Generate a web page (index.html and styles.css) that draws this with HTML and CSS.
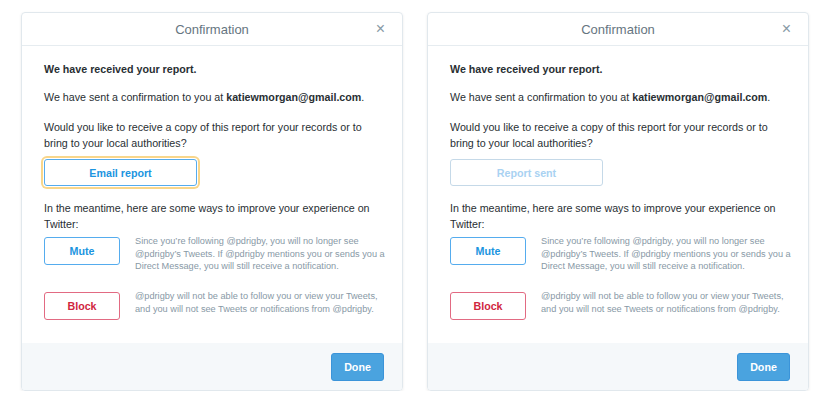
FILE: index.html
```html
<!DOCTYPE html>
<html lang="en">
<head>
    <meta charset="UTF-8">
    <title>Confirmation</title>
<link rel="stylesheet" href="styles.css">
</head>
<body>
    <div class="stage">
        <div class="dialog">
            <div class="dialog-head">
                <h2>Confirmation</h2>
                <span class="close">&times;</span>
            </div>
            <div class="dialog-body">
                <p class="lead">We have received your report.</p>
                <p class="sent">We have sent a confirmation to you at <b>katiewmorgan@gmail.com</b>.</p>
                <p class="ask">Would you like to receive a copy of this report for your records or to bring to your local authorities?</p>
                <button class="btn btn-wide focus">Email report</button>
                <p class="meantime">In the meantime, here are some ways to improve your experience on Twitter:</p>
                <div class="option">
                    <button class="btn btn-small">Mute</button>
                    <p>Since you’re following @pdrigby, you will no longer see @pdrigby’s Tweets. If @pdrigby mentions you or sends you a Direct Message, you will still receive a notification.</p>
                </div>
                <div class="option">
                    <button class="btn btn-small danger">Block</button>
                    <p>@pdrigby will not be able to follow you or view your Tweets, and you will not see Tweets or notifications from @pdrigby.</p>
                </div>
            </div>
            <div class="dialog-foot">
                <button class="done">Done</button>
            </div>
        </div>

        <div class="dialog">
            <div class="dialog-head">
                <h2>Confirmation</h2>
                <span class="close">&times;</span>
            </div>
            <div class="dialog-body">
                <p class="lead">We have received your report.</p>
                <p class="sent">We have sent a confirmation to you at <b>katiewmorgan@gmail.com</b>.</p>
                <p class="ask">Would you like to receive a copy of this report for your records or to bring to your local authorities?</p>
                <button class="btn btn-wide disabled">Report sent</button>
                <p class="meantime">In the meantime, here are some ways to improve your experience on Twitter:</p>
                <div class="option">
                    <button class="btn btn-small">Mute</button>
                    <p>Since you’re following @pdrigby, you will no longer see @pdrigby’s Tweets. If @pdrigby mentions you or sends you a Direct Message, you will still receive a notification.</p>
                </div>
                <div class="option">
                    <button class="btn btn-small danger">Block</button>
                    <p>@pdrigby will not be able to follow you or view your Tweets, and you will not see Tweets or notifications from @pdrigby.</p>
                </div>
            </div>
            <div class="dialog-foot">
                <button class="done">Done</button>
            </div>
        </div>
    </div>
</body>
</html>
```

FILE: styles.css
```css
*{
    margin: 0;
    padding: 0;
    box-sizing: border-box;
}
body{
    background: #fff;
    font-family: "Liberation Sans", Arial, sans-serif;
    color: #292f33;
}
.stage{
    display: flex;
    gap: 24px;
    padding: 12px 0 0 21px;
}
.dialog{
    width: 382px;
    height: 379px;
    border: 1px solid #e1e8ed;
    border-radius: 4px;
    box-shadow: 0 1px 3px rgba(0,0,0,0.08);
    display: flex;
    flex-direction: column;
    overflow: hidden;
}
.dialog-head{
    height: 33px;
    border-bottom: 1px solid #e6ecf0;
    display: flex;
    align-items: center;
    justify-content: center;
    position: relative;
}
.dialog-head h2{
    font-size: 13px;
    font-weight: normal;
    color: #66757f;
    margin-top: 1px;
}
.close{
    position: absolute;
    right: 17px;
    top: 7px;
    font-size: 16px;
    color: #8899a6;
}
.dialog-body{
    flex: 1;
    padding: 15px 14px 0 22px;
    font-size: 10.7px;
    line-height: 16px;
}
.lead{
    font-weight: bold;
}
.sent{
    margin-top: 12px;
}
.ask{
    margin-top: 14px;
}
.btn{
    display: block;
    background: #fff;
    border: 1px solid #55acee;
    border-radius: 3px;
    color: #1b95e0;
    font-family: "Liberation Sans", Arial, sans-serif;
    font-size: 10.7px;
    font-weight: bold;
    height: 27px;
}
.btn-wide{
    width: 153px;
    margin-top: 8px;
}
.focus{
    box-shadow: 0 0 0 1px #fff, 0 0 0 3px #f9d68a;
}
.disabled{
    border-color: #c5d9e8;
    color: #a9d2f2;
}
.meantime{
    margin-top: 14px;
}
.option{
    display: flex;
    gap: 15px;
    margin-top: 5px;
}
.option + .option{
    margin-top: 19.5px;
}
.btn-small{
    width: 76px;
    height: 28px;
    flex: none;
}
.danger{
    border-color: #e26a82;
    color: #d0263e;
}
.option p{
    font-size: 9.2px;
    line-height: 12.5px;
    color: #8899a6;
    margin-top: -2px;
}
.dialog-foot{
    height: 47px;
    background: #f5f8fa;
    display: flex;
    align-items: center;
    justify-content: flex-end;
    padding-right: 18px;
}
.done{
    width: 53px;
    height: 28px;
    background: #4aa3df;
    border: 1px solid #3b94d9;
    border-radius: 3px;
    color: #fff;
    font-family: "Liberation Sans", Arial, sans-serif;
    font-size: 10.7px;
    font-weight: bold;
}
```
